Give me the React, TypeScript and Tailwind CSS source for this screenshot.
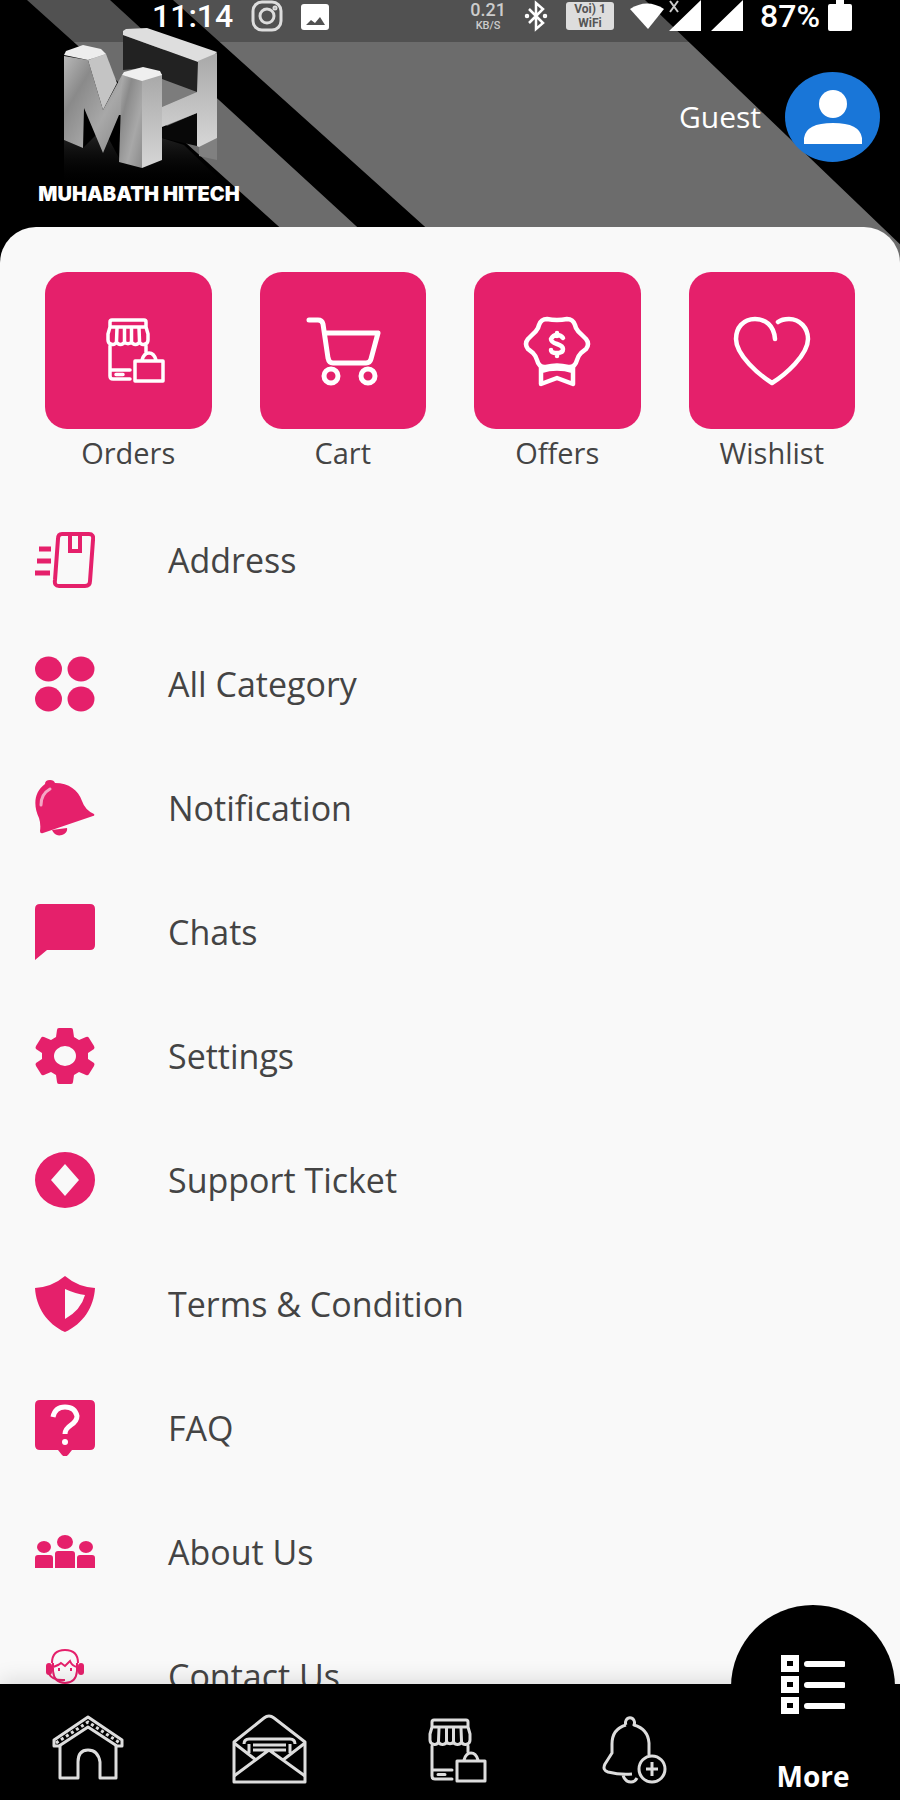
import type { ReactNode } from "react";

const PINK = "#e5206b";

function StoreIcon({ className, stroke }: { className: string; stroke: number }) {
  return (
    <svg className={className} viewBox="0 0 60 66" fill="none" stroke="currentColor" strokeWidth={stroke} strokeLinejoin="round" strokeLinecap="round" aria-hidden="true">
      <path d="M6 2h32q2 0 2 2v5H4V4q0-2 2-2zM4 9L2 16v6a4.500 4.500 0 0 0 8.500 2a4.500 4.500 0 0 0 8 0a4.500 4.500 0 0 0 7 0a4.500 4.500 0 0 0 8 0a4.500 4.500 0 0 0 8.500-2v-6L40 9" />
      <path d="M11 10l-.5 13M18.500 10v13M25.500 10v13M33 10l.5 13" />
      <path d="M4 28v30q0 3 3 3h17M5 52h19M10 56.500h7M40 28v6" />
      <path d="M29 43h28v20H29zM36 42q2-7 7-7t7 7" />
    </svg>
  );
}

function CartIcon() {
  return (
    <svg className="h-[72px] w-[76px]" viewBox="0 0 76 72" fill="none" stroke="currentColor" strokeWidth="5" strokeLinecap="round" strokeLinejoin="round" aria-hidden="true">
      <path d="M4 5h9q4 0 5 4l5 34q1 5 5 5h33q4 0 5-4l7-26H21" />
      <circle cx="26" cy="61" r="7" />
      <circle cx="63" cy="61" r="7" />
    </svg>
  );
}

function OffersIcon() {
  return (
    <svg className="h-[72px] w-[68px]" viewBox="0 0 68 72" fill="none" stroke="currentColor" strokeWidth="4.500" strokeLinejoin="round" strokeLinecap="round" aria-hidden="true">
      <path d="M24 4q-6 0-8 6l-1 3q-2 4-6 7l-4 4q-4 5 0 10l5 4q3 3 4 7q2 8 9 7q11-3 22 0q7 1 9-7q1-4 4-7l5-4q4-5 0-10l-4-4q-4-3-6-7l-1-3q-2-6-8-6q-10 2-20 0z" />
      <path d="M18 52v17l16-6 16 6V52M18 56q16-5 32 0" />
      <path d="M40 23q-2-3-6-3t-6 4q0 3 6 5t6 5q0 4-6 4t-6-3M34 18v3M34 38v3" />
    </svg>
  );
}

function HeartIcon() {
  return (
    <svg className="h-[72px] w-[78px]" viewBox="0 0 78 72" fill="none" stroke="currentColor" strokeWidth="4.500" strokeLinejoin="round" strokeLinecap="round" aria-hidden="true">
      <path d="M42 24C41 10 32 4 22 4C10 4 3 13 3 24C3 40 26 60 39 68C52 60 75 40 75 24C75 13 67 4 56 4Q49 4 45 7" />
    </svg>
  );
}

function MenuSvg({ children }: { children: ReactNode }) {
  return (
    <svg className="h-14 w-[60px] shrink-0 text-[#e5206b]" viewBox="0 0 60 56" fill="currentColor" aria-hidden="true">
      {children}
    </svg>
  );
}

const menu: { label: string; icon: ReactNode }[] = [
  {
    label: "Address",
    icon: (
      <g fill="none" stroke={PINK} strokeWidth="4">
        <path d="M27 2h27q5 0 4 6l-3 41q0 5-5 5H24q-5 0-4-6l3-41q0-5 4-5z" />
        <path d="M35 4v15h10V4" />
        <path d="M4 17h12M2 29h14M0 41h15" strokeWidth="5" />
      </g>
    ),
  },
  {
    label: "All Category",
    icon: (
      <>
        <ellipse cx="13.500" cy="13" rx="13.500" ry="12.500" />
        <ellipse cx="46" cy="13" rx="13.500" ry="12.500" />
        <ellipse cx="13.500" cy="43" rx="13.500" ry="12.500" />
        <ellipse cx="46" cy="43" rx="13.500" ry="12.500" />
      </>
    ),
  },
  {
    label: "Notification",
    icon: (
      <>
        <path d="M10 4q0-4 5-4q4 0 5 3C34 3 43 10 47 21q3 9 12 13q1 2-1 2L8 53q-3 1-3-2q1-7-1-13C-2 25-1 12 10 4z" />
        <path d="M17 50q3 7 10 5q6-2 5-7z" />
        <path d="M6 25Q6 14 15 9" fill="none" stroke="#f4a7c5" strokeWidth="3" strokeLinecap="round" />
      </>
    ),
  },
  {
    label: "Chats",
    icon: <path d="M5 0h50q5 0 5 5v36q0 5-5 5H12L0 56V5q0-5 5-5z" />,
  },
  {
    label: "Settings",
    icon: (
      <path
        fillRule="evenodd"
        d="M24 0h12q2 0 2 2l1 7 5 3 7-3q2-1 3 1l5 8q1 2 0 3l-6 4v6l6 4q1 1 0 3l-5 8q-1 2-3 1l-7-3-5 3-1 7q0 2-2 2H24q-2 0-2-2l-1-7-5-3-7 3q-2 1-3-1l-5-8q-1-2 0-3l6-4v-6l-6-4q-1-1 0-3l5-8q1-2 3-1l7 3 5-3 1-7q0-2 2-2zM30 18a11 10 0 1 0 0 20a11 10 0 1 0 0-20z"
      />
    ),
  },
  {
    label: "Support Ticket",
    icon: <path fillRule="evenodd" d="M30 0a30 28 0 1 0 0 56a30 28 0 1 0 0-56zM30 12l14 16-14 16-14-16z" />,
  },
  {
    label: "Terms & Condition",
    icon: <path fillRule="evenodd" d="M30 0q13 11 30 12C59 31 48 48 30 56C12 48 1 31 0 12Q17 11 30 0zM30 13v30q16-9 20-24q-9-1-20-6z" />,
  },
  {
    label: "FAQ",
    icon: (
      <>
        <path d="M5 0h50q5 0 5 5v40q0 5-5 5H37l-4 5q-3 3-6 0l-4-5H5q-5 0-5-5V5q0-5 5-5z" />
        <path d="M18 17q2-10 12-10t12 9q0 5-6 9t-6 9" fill="none" stroke="#fff" strokeWidth="5" />
        <circle cx="30" cy="42" r="3" fill="#fff" />
      </>
    ),
  },
  {
    label: "About Us",
    icon: (
      <>
        <ellipse cx="30" cy="18" rx="8" ry="7" />
        <ellipse cx="9" cy="23" rx="7" ry="6" />
        <ellipse cx="51" cy="23" rx="7" ry="6" />
        <path d="M20 44V30q0-3 3-3h14q3 0 3 3v14zM0 44V34q0-3 3-3h12q3 0 3 3v10zM42 44V34q0-3 3-3h12q3 0 3 3v10z" />
      </>
    ),
  },
  {
    label: "Contact Us",
    icon: (
      <>
        <g fill="none" stroke={PINK} strokeWidth="2">
          <path d="M17 15Q17 2 30 2t13 13M18 15v8q1 12 12 12t12-12v-8M18 19q6-2 8-4l4 3 5-5q2 5 7 6" />
          <path d="M24 20v3M36 20v3M14 26q4 7 16 6M12 50q2-9 11-11h14q9 2 11 11" />
        </g>
        <rect x="11" y="15" width="6" height="12" rx="3" />
        <rect x="43" y="15" width="6" height="12" rx="3" />
      </>
    ),
  },
];

const tiles = [
  { label: "Orders", icon: <StoreIcon className="ml-4 h-[66px] w-[60px]" stroke={3.5} /> },
  { label: "Cart", icon: <CartIcon /> },
  { label: "Offers", icon: <OffersIcon /> },
  { label: "Wishlist", icon: <HeartIcon /> },
];

function StatusBar() {
  return (
    <div className="relative flex h-[42px] items-start justify-between bg-black/25 pr-[48px] pl-[152px] font-[Roboto,sans-serif] text-[32px] leading-8 font-medium">
      <div className="flex items-center gap-[18px]">
        <span>11:14</span>
        <svg className="h-8 w-8" viewBox="0 0 32 32" fill="none" stroke="#ddd" strokeWidth="3" aria-hidden="true">
          <rect x="2" y="2" width="28" height="28" rx="9" />
          <circle cx="16" cy="16" r="7" />
          <circle cx="24" cy="8" r="1" />
        </svg>
        <svg className="h-8 w-7" viewBox="0 0 28 32" aria-hidden="true">
          <rect y="4" width="28" height="26" rx="3" fill="#fff" />
          <path d="M5 25l5-5 4 3 5-6 5 8z" fill="#515151" />
        </svg>
      </div>
      <div className="flex items-center">
        <div className="flex w-9 flex-col items-center text-[#ccc]">
          <span className="text-[18px] leading-5">0.21</span>
          <span className="text-[11px] leading-3">KB/S</span>
        </div>
        <svg className="ml-[18px] h-8 w-6" viewBox="0 0 24 32" fill="none" stroke="#fff" strokeWidth="2.500" aria-hidden="true">
          <path d="M5 9l14 14-7 6V3l7 6L5 23" />
          <circle cx="3" cy="16" r="1" />
          <circle cx="21" cy="16" r="1" />
        </svg>
        <div className="ml-[18px] flex h-7 w-12 flex-col items-center rounded-[3px] bg-[#ddd] text-[12px] leading-[14px] font-bold text-[#555]">
          <span>Voi) 1</span>
          <span>WiFi</span>
        </div>
        <svg className="ml-4 h-8 w-[114px]" viewBox="0 0 114 32" fill="#fff" aria-hidden="true">
          <path d="M0 9Q17-2 34 9L18 29z" />
          <path d="M71 0v31H39zM113 0v31H81z" />
          <path d="M40 1l8 11M48 1l-8 11" stroke="#ccc" strokeWidth="2" />
        </svg>
        <span className="ml-4">87%</span>
        <svg className="ml-2 h-8 w-6" viewBox="0 0 24 32" fill="#fff" aria-hidden="true">
          <path d="M8 0h8v4h6q2 0 2 2v23q0 2-2 2H2q-2 0-2-2V6q0-2 2-2h6z" />
        </svg>
      </div>
    </div>
  );
}

function Logo() {
  return (
    <div className="flex w-[200px] flex-col items-center">
      <svg className="h-[160px] w-[160px]" viewBox="0 0 160 160" aria-hidden="true">
        <defs>
          <linearGradient id="front" x1="0" y1="0" x2="1" y2="1">
            <stop offset="0" stopColor="#b8b8b8" />
            <stop offset="0.300" stopColor="#8a8a8a" />
            <stop offset="0.650" stopColor="#a8a8a8" />
            <stop offset="1" stopColor="#8a8a8a" />
          </linearGradient>
          <linearGradient id="side" x1="0" y1="0" x2="0" y2="1">
            <stop offset="0" stopColor="#a8a8a8" />
            <stop offset="1" stopColor="#d6d6d6" />
          </linearGradient>
          <linearGradient id="mirror" x1="0" y1="0" x2="0" y2="1">
            <stop offset="0" stopColor="#2c2c2c" />
            <stop offset="1" stopColor="#000" stopOpacity="0" />
          </linearGradient>
        </defs>
        <path d="M5 114l19 8 20-20 16 30 43-6v-14l22 7 34 33v8H5z" fill="url(#mirror)" />
        <path d="M140 121l18-9v22l-18-4z" fill="#808080" />
        <path d="M64 9l75 27v31l-36-13-18-12-21 2z" fill="#222" />
        <path d="M103 102l35-15v33l-35-8z" fill="#080808" />
        <path d="M64 5l3-2 21-1 70 24-5 6-14 4L64 9z" fill="#dedede" />
        <path d="M103 53l35 13-35 15z" fill="#7c7c7c" />
        <path d="M139 35l19-8v85l-18 9-2-1V87l-35 14V81l35-15z" fill="url(#side)" />
        <path d="M5 30l24 4 15 50 19-35v40l-3 0-16 38-19-45-1 40-19-8z" fill="url(#front)" />
        <path d="M29 34l18-6 11 29-14 27z" fill="#c4c4c4" />
        <path d="M5 29l2-4 17-6 18 4 5 5-18 6z" fill="#ededed" />
        <path d="M63 49l20 5v88l-23-6z" fill="url(#front)" />
        <path d="M83 54l20-6v86l-20 8z" fill="url(#side)" />
        <path d="M63 49l2-3 19-5 17 4 2 4-20 6z" fill="#efefef" />
      </svg>
      <span className="font-[Inter] text-[20px] leading-4 font-black whitespace-nowrap">MUHABATH HITECH</span>
    </div>
  );
}

const navItems = [
  {
    label: "Home",
    icon: (
      <>
        <path d="M38 3L4 26v6h5l29-19 29 19h5v-6z" />
        <path d="M6 29L38 8l32 21" strokeDasharray="3 3" />
        <path d="M10 32v32h18V48q0-12 10-12t12 12v16h16V32" />
      </>
    ),
  },
  {
    label: "Messages",
    icon: (
      <>
        <path d="M4 28v40h71V28L44 4q-5-4-10 0z" />
        <path d="M4 29l22 17M75 29L53 46M4 62l35-26 36 26M14 30q0-5 5-5h41q5 0 5 5M19 30v9M60 30v9M23 31h33M23 36h33" />
      </>
    ),
  },
  { label: "Orders", icon: null },
  {
    label: "Alerts",
    icon: (
      <g transform="translate(-4 0)">
        <path d="M37 11a4.500 5 0 1 1 8 0q14 4 15 18v12M37 11Q23 15 23 30v9L16 50q-3 6 3 8 12 3 24 2M34 61q2 7 8 7 4 0 6-4" />
        <circle cx="63" cy="55" r="13" />
        <path d="M63 48v14M57 55h12" />
      </g>
    ),
  },
];

export default function App() {
  return (
    <div className="flex h-screen flex-col overflow-hidden bg-[#f9f9f9] font-['Open_Sans',sans-serif]">
      <header className="relative h-[270px] shrink-0 bg-black text-white">
        <svg className="absolute inset-0 h-full w-full" viewBox="0 0 900 270" preserveAspectRatio="none" fill="#6c6c6c" aria-hidden="true">
          <path d="M27 0h83l294 270h-77zM173 0h472l282 270H473z" />
        </svg>
        <StatusBar />
        <div className="relative -mt-4 flex items-start justify-between pr-5 pl-[39px]">
          <Logo />
          <div className="mt-[46px] flex items-center gap-6">
            <span className="text-[30px] leading-10">Guest</span>
            <button type="button" aria-label="Profile" className="flex h-[90px] w-[95px] items-center justify-center rounded-[50%] bg-[#1976d8]">
              <svg className="h-14 w-[58px]" viewBox="0 0 58 56" fill="#fff" aria-hidden="true">
                <circle cx="29" cy="15" r="14" />
                <path d="M0 55V49Q2 34 29 34t29 15v6z" />
              </svg>
            </button>
          </div>
        </div>
      </header>

      <main className="relative -mt-[43px] min-h-0 flex-1 overflow-hidden rounded-t-[36px] bg-[#f9f9f9] pt-[45px] text-[#444]">
        <div className="grid grid-cols-4 gap-12 px-[45px]">
          {tiles.map((tile) => (
            <button type="button" key={tile.label} className="flex flex-col items-center text-[29px] leading-[48px]">
              <span className="flex h-[157px] w-full items-center justify-center rounded-[22px] bg-[#e5206b] text-white">{tile.icon}</span>
              {tile.label}
            </button>
          ))}
        </div>
        <ul className="mt-[21px]">
          {menu.map((item) => (
            <li key={item.label}>
              <a href="#" className="flex h-[124px] items-center gap-[73px] px-[35px] text-[34px] leading-10">
                <MenuSvg>{item.icon}</MenuSvg>
                {item.label}
              </a>
            </li>
          ))}
        </ul>
      </main>

      <nav className="relative grid h-[116px] shrink-0 grid-cols-[30fr_30fr_30fr_31fr_29fr] bg-black text-white shadow-[0_-4px_20px_rgba(0,0,0,0.12)]">
        {navItems.map((item) => (
          <button type="button" key={item.label} aria-label={item.label} className="flex items-start justify-center pt-[30px] text-[#ddd]">
            {item.icon ? (
              <svg className="h-[72px] w-20" viewBox="0 0 80 72" fill="none" stroke="currentColor" strokeWidth="3" strokeLinejoin="round" aria-hidden="true">
                {item.icon}
              </svg>
            ) : (
              <StoreIcon className="mt-1 ml-4 h-[66px] w-[60px]" stroke={3} />
            )}
          </button>
        ))}
        <button type="button" className="relative flex flex-col items-center justify-end pb-1 text-[28px] leading-10 font-bold">
          <span className="absolute -top-[79px] flex h-[164px] w-[164px] items-center justify-center rounded-full bg-black">
            <svg className="-mt-1 h-[62px] w-16" viewBox="0 0 64 62" fill="none" stroke="#fff" strokeWidth="6" aria-hidden="true">
              <path d="M3 4h12v11H3zM3 25h12v11H3zM3 46h12v11H3z" />
              <path d="M26 10h36M26 31h36M26 52h36" strokeLinecap="round" />
            </svg>
          </span>
          <span className="relative">More</span>
        </button>
      </nav>
    </div>
  );
}
